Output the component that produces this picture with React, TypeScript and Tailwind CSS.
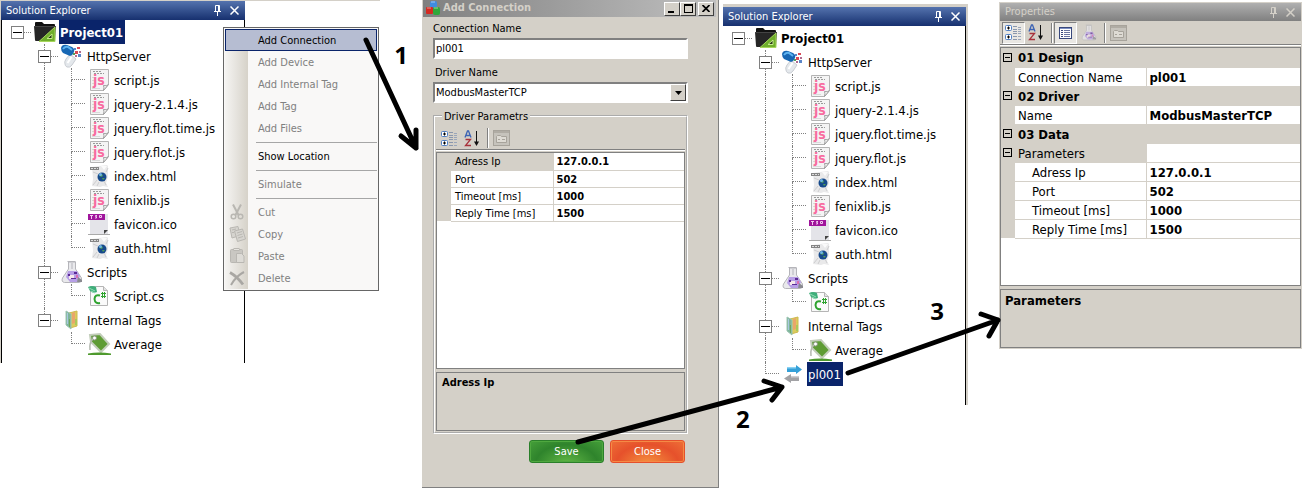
import React from "react";

const UI = "font-['DejaVu_Sans_Condensed','Noto_Sans',sans-serif]";
const COLUMNS =
  "grid grid-cols-[minmax(0,245fr)_minmax(0,177fr)_minmax(0,297fr)_minmax(0,4fr)_minmax(0,245fr)_minmax(0,31fr)_minmax(0,303fr)_minmax(0,7fr)]";

/* ---------- icons ---------- */

function ProjectIcon() {
  return (
    <svg width="23" height="22" viewBox="0 0 23 22" aria-hidden="true">
      <path d="M1 2q0-1 1-1h6l2 2h10q1 0 1 1v3H1z" fill="#111" />
      <path d="M0 5h22l-1 14q0 1-1 1H2q-1 0-1-1z" fill="#262626" />
      <path d="M0 5h22v1H0z" fill="#444" />
      <path d="M5 20.500 21 6v14.500z" fill="#6fae2c" stroke="#a6d65c" />
      <path d="M13 17.500l5-4.500v4.500z" fill="#2b3a1c" stroke="#c6ec8a" />
    </svg>
  );
}

function ServerIcon() {
  return (
    <svg width="22" height="24" viewBox="0 0 22 24" aria-hidden="true">
      <path d="M4 20q-1-2 1-5l4-5 6 5-4 6q-2 3-5 2-2-1-2-3z" fill="#e4e8ec" stroke="#c9cdd3" />
      <path d="M6.500 19l4-6" stroke="#fff" strokeWidth="2" />
      <path d="M0 4q1-4 6-3l5 2q3 2 2 5-1 3-4 4L2 9Q0 7 0 4z" fill="#1767b4" />
      <path d="M2 5q2-3 5-2l4 3" stroke="#5fb4f0" strokeWidth="2" fill="none" />
      <path d="M14 7h3v3h-3zM16 3h3v2h-3z" fill="#d94a55" />
      <path d="M17 10h3v3h-3zM13 4h2v2h-2z" fill="#5a86c8" />
      <path d="M14 11h2v2h-2zM18 7h2v2h-2z" fill="#b06a90" />
      <path d="M12 9h2v2h-2z" fill="#55a058" />
    </svg>
  );
}

function JsIcon() {
  return (
    <svg width="21" height="24" viewBox="0 0 21 24" aria-hidden="true">
      <path d="M1.500 1.500h18v15l-5 6h-13z" fill="#f4f4f4" stroke="#b4b4b4" />
      <path d="M14.500 22.500q1-3 0-5 3 1 5-1z" fill="#fff" stroke="#9c9c9c" />
      <path d="M4 3.500h9M5 5.500h10" stroke="#999" strokeDasharray="2 1" />
      <path d="M3 9.500h2M3 12.500h2M3 15.500h2M3 20.500h8" stroke="#dadada" />
      <text x="4" y="17" fontSize="14" fontWeight="bold" fill="#f86ca0" fontFamily="DejaVu Sans Condensed, sans-serif">
        js
      </text>
    </svg>
  );
}

function HtmlIcon() {
  return (
    <svg width="21" height="24" viewBox="0 0 21 24" aria-hidden="true">
      <path d="M3 3l7-1 8-1 1 1v11l-2 6 2 4-5-1-3 1-8-1 1-7z" fill="#e9e9ea" />
      <path d="M4 8l5 2M4 21l4-5M17 8l2-4M15 17l2 4M8 22l2-4" stroke="#cdcdcf" />
      <path d="M12 2l6 0-3 4z" fill="#fafafa" />
      <path d="M1 3h9v3H1z" fill="#858585" />
      <path d="M2 4.500h2m1 0h2m1 0h1" stroke="#ddd" />
      <circle cx="13" cy="13" r="4.500" fill="#174a8c" />
      <path d="M10 12q2-3 4-1l-1 2zM13 14l3 0-2 2z" fill="#4f9b58" />
      <circle cx="11.500" cy="10.500" r="1.500" fill="#6fb4e4" />
    </svg>
  );
}

function IcoIcon() {
  return (
    <svg width="22" height="24" viewBox="0 0 22 24" aria-hidden="true">
      <path d="M2 2h18v20H2z" fill="#e4e4e9" />
      <path d="M0 22.500h22" stroke="#aaa" />
      <path d="M0 2h17v6H0z" fill="#a0149c" />
      <path d="M2 3.500h3M3.500 4v3M9 3.500H7.500v1h1v1.500H7M11.500 3.500h2v2h-2z" stroke="#f3c9f0" fill="none" />
      <path d="M16 22v-4h4z" fill="#444" />
    </svg>
  );
}

function FlaskIcon({ faded = false }: { faded?: boolean }) {
  return (
    <svg
      width={faded ? 16 : 22}
      height={faded ? 17 : 24}
      viewBox="0 0 22 24"
      className={faded ? "opacity-70" : ""}
      aria-hidden="true"
    >
      <path d="M6.500 1.500h8M7.500 2v7L1.500 18q-1.500 4 2 4.500h15q3-.5 2-4.500l-6-9V2z" fill="#e9e9ec" stroke="#b5b5ba" />
      <path d="M11 3v6" stroke="#cfcfd4" strokeWidth="2" />
      <path d="M7 11h9l3 5-3 6H9l-4-5z" fill="#b79fe6" />
      <path d="M8 15h5v4H8z" fill="#f6eaea" />
      <path d="M13 12h3v2h-3zM7 14h2v2H7zM10 18h5v1h-5z" fill="#5c2b95" />
      <path d="M15 15h2v3h-2z" fill="#d96db0" />
      <path d="M17 17l4 3v2h-5z" fill="#8a8a90" />
    </svg>
  );
}

function CsIcon() {
  return (
    <svg width="22" height="24" viewBox="0 0 22 24" aria-hidden="true">
      <path d="M2.500 2.500h13l4 4v15h-17z" fill="#fafafa" stroke="#b5b5b5" />
      <path d="M15.500 2.500v4h4" fill="#e3e3e3" stroke="#b5b5b5" />
      <path d="M0 3q4-2 8 0l1 5q-4 2-7-1z" fill="#3fae7a" />
      <path d="M1 4l6 3M3 7l4 2" stroke="#93dcb5" />
      <path d="M12 11.500q-5-1.500-5.500 3.500.5 5 5.500 4" fill="none" stroke="#2fa32f" strokeWidth="2" />
      <path d="M13 9.500h5M13 12.500h5M14.500 8v6M16.500 8v6" stroke="#2fa32f" />
    </svg>
  );
}

function TagsFolderIcon() {
  return (
    <svg width="15" height="20" viewBox="0 0 15 20" aria-hidden="true">
      <path d="M4 3l8-2v15l-7 2z" fill="#dccb5c" stroke="#cdb94e" />
      <path d="M7 3l3-1v11l-3 1z" fill="#e9a66a" />
      <path d="M10 9h2v6h-2z" fill="#a9c95a" />
      <path d="M1 1l5 3v15l-5-4z" fill="#7fb59b" stroke="#9cc4b2" />
      <path d="M2.500 3v11" stroke="#a9c8e0" />
      <path d="M4.500 9v8" stroke="#6ea65a" />
    </svg>
  );
}

function TagIcon() {
  return (
    <svg width="23" height="24" viewBox="0 0 23 24" aria-hidden="true">
      <path d="M2 3l10-1 9 10-8 8L3 10z" fill="#5e9c34" stroke="#c3cebb" strokeWidth="2" />
      <circle cx="6.500" cy="6" r="2" fill="#fff" stroke="#8d9b84" />
      <path d="M5 7Q1 10 2 18" fill="none" stroke="#b4b9b0" strokeWidth="1.500" />
      <path d="M0 21.500q11-2 23 0V23H0z" fill="#4f9a2e" />
    </svg>
  );
}

function LinkIcon() {
  return (
    <svg width="18" height="18" viewBox="0 0 18 18" aria-hidden="true">
      <path d="M3 2h9V0l6 4.500L12 9V7H3z" fill="#35a0d8" />
      <path d="M3 2h9v1.500H3z" fill="#8bd2f3" />
      <path d="M15 11H7V9l-7 4.500L7 18v-2h8z" fill="#a2a2a5" />
      <path d="M7 11h8v1.500H7z" fill="#cfcfd2" />
    </svg>
  );
}

function PinIcon() {
  return (
    <svg width="9" height="11" viewBox="0 0 9 11" aria-hidden="true" fill="none" stroke="currentColor">
      <path d="M2.500 6V.5h4V6M5.500 1v5M1 6.500h7M4.500 7v4" />
    </svg>
  );
}

function CrossIcon() {
  return (
    <svg width="9" height="9" viewBox="0 0 9 9" aria-hidden="true" stroke="currentColor" strokeWidth="1.500">
      <path d="M0.500 0.500l8 8M8.500 0.500l-8 8" />
    </svg>
  );
}

function CategoryIcon() {
  return (
    <svg width="17" height="17" viewBox="0 0 17 17" aria-hidden="true" fill="none">
      <rect x="0.500" y="1.500" width="6" height="5" rx="1" fill="#fff" stroke="#4f7fc4" />
      <rect x="0.500" y="10.500" width="6" height="5" rx="1" fill="#fff" stroke="#4f7fc4" />
      <path d="M2 4h3M3.500 2.500v3M2 13h3M3.500 11.500v3" stroke="#000" />
      <path d="M8 2.500h4M8 5.500h4M8 7.500h4M8 9.500h4M8 12.500h4M8 15.500h4" stroke="#8a97ad" />
      <path d="M13 3.500h3M13 5.500h3M13 7.500h3M13 9.500h3M13 12.500h3M13 15.500h3" stroke="#9aa6ba" />
    </svg>
  );
}

function SortIcon() {
  return (
    <svg width="16" height="17" viewBox="0 0 16 17" aria-hidden="true" fill="none">
      <path d="M1 7.500 3.500 1h1L7 7.500M2 5.500h4" stroke="#3c63b4" strokeWidth="1.300" />
      <path d="M1.500 9.500h5l-5 6h5.500" stroke="#a8323c" strokeWidth="1.300" />
      <path d="M12.500 1v14" stroke="#111" />
      <path d="M10 11.500h5l-2.500 4.500z" fill="#111" />
    </svg>
  );
}

function PagesIcon() {
  return (
    <svg width="17" height="16" viewBox="0 0 17 16" aria-hidden="true" fill="none">
      <rect x="0.500" y="0.500" width="16" height="15" fill="#c6c3bc" stroke="#a7a39b" />
      <path d="M1 2h15" stroke="#b0aca4" strokeWidth="2" />
      <path d="M3.500 12.500v-6l1-1h3l1 1h5v6z" stroke="#a7a39b" fill="#dedbd4" />
      <path d="M5 9.500h2M9 9.500h3" stroke="#a7a39b" />
    </svg>
  );
}

function ListIcon() {
  return (
    <svg width="13" height="12" viewBox="0 0 13 12" aria-hidden="true">
      <rect x="0.500" y="0.500" width="12" height="11" fill="#fff" stroke="#39487c" />
      <path d="M1 1.500h11" stroke="#7d8fc4" />
      <path d="M2 3.500h2M2 5.500h2M2 7.500h2M2 9.500h2" stroke="#39487c" />
      <path d="M5 3.500h6M5 5.500h6M5 7.500h6M5 9.500h6" stroke="#6a76a0" />
    </svg>
  );
}

function AppIcon() {
  return (
    <svg width="15" height="15" viewBox="0 0 15 15" aria-hidden="true">
      <rect x="4" y="0" width="7" height="7" rx="2" fill="#3f8be0" />
      <rect x="0" y="6" width="7" height="7" rx="1" fill="#d52a22" />
      <rect x="7" y="6" width="7" height="8" rx="2" fill="#2fa83a" />
      <path d="M1 7h4M8 7h4M5 1h4" stroke="#fff" strokeOpacity="0.500" />
    </svg>
  );
}

function CutIcon() {
  return (
    <svg width="14" height="16" viewBox="0 0 14 16" aria-hidden="true" fill="none" stroke="#b9b7b2">
      <path d="M3 0.500 8.500 11M11 0.500 5.500 11" strokeWidth="2" />
      <circle cx="3.500" cy="12.500" r="2.300" strokeWidth="1.500" />
      <circle cx="10.500" cy="12.500" r="2.300" strokeWidth="1.500" />
    </svg>
  );
}

function CopyIcon() {
  return (
    <svg width="17" height="16" viewBox="0 0 17 16" aria-hidden="true" fill="#d6d4cf" stroke="#b9b7b2">
      <path d="M1 2l8-1.500 2 9L3 12z" />
      <path d="M5.500 5l8-2 3 10-8 2.500z" />
      <path d="M8 7l5-1.500M8.500 9.500l5-1.500M9 12l5-1.500M3 4l4-1M3 6.500h2" fill="none" />
    </svg>
  );
}

function PasteIcon() {
  return (
    <svg width="15" height="16" viewBox="0 0 15 16" aria-hidden="true" fill="#c9c7c2" stroke="#b9b7b2">
      <rect x="0.500" y="1.500" width="12" height="13" rx="1" />
      <rect x="4" y="0.500" width="5" height="2" fill="#e6e4df" />
      <path d="M6.500 5.500h5l2.500 2.500v6.500H6.500z" fill="#dddbd6" />
    </svg>
  );
}

function DeleteIcon() {
  return (
    <svg width="16" height="15" viewBox="0 0 16 15" aria-hidden="true" fill="none" stroke="#a9a7a3">
      <path d="M1 1.500q7 4 13 12" strokeWidth="2.800" />
      <path d="M15 1Q7 5 2 14" strokeWidth="2" />
    </svg>
  );
}

/* ---------- solution tree ---------- */

type Node = { label: string; level: number; icon: React.ReactNode; last?: boolean; bold?: boolean };

const js = <JsIcon />;
const html = <HtmlIcon />;

const NODES: Node[] = [
  { label: "Project01", level: 0, icon: <ProjectIcon />, bold: true },
  { label: "HttpServer", level: 1, icon: <ServerIcon /> },
  { label: "script.js", level: 2, icon: js },
  { label: "jquery-2.1.4.js", level: 2, icon: js },
  { label: "jquery.flot.time.js", level: 2, icon: js },
  { label: "jquery.flot.js", level: 2, icon: js },
  { label: "index.html", level: 2, icon: html },
  { label: "fenixlib.js", level: 2, icon: js },
  { label: "favicon.ico", level: 2, icon: <IcoIcon /> },
  { label: "auth.html", level: 2, icon: html, last: true },
  { label: "Scripts", level: 1, icon: <FlaskIcon /> },
  { label: "Script.cs", level: 2, icon: <CsIcon />, last: true },
  { label: "Internal Tags", level: 1, icon: <TagsFolderIcon /> },
  { label: "Average", level: 2, icon: <TagIcon />, last: true },
];

function Blank() {
  return <span className="h-6 w-[27px] shrink-0" />;
}

function Guide({ branch, through }: { branch: boolean; through: boolean }) {
  return (
    <span className="flex h-6 w-[27px] shrink-0 flex-col pl-[13px]">
      <span className={`h-3 border-l border-dotted border-[#808080] ${branch ? "border-b" : ""}`} />
      <span className={`h-3 ${through ? "border-l border-dotted border-[#808080]" : ""}`} />
    </span>
  );
}

function Expander({ above, below, label }: { above: boolean; below: boolean; label: string }) {
  return (
    <span className="grid h-6 w-[27px] shrink-0 grid-cols-[7px_13px_7px] grid-rows-[6px_13px_5px]">
      <span className={`col-start-2 ml-[6px] ${above ? "border-l border-dotted border-[#808080]" : ""}`} />
      <button
        type="button"
        aria-label={`Collapse ${label}`}
        className="col-start-2 row-start-2 flex items-center justify-center border border-[#808080] bg-white"
      >
        <span className="h-px w-[9px] bg-black" />
      </button>
      <span className="col-start-3 row-start-2 self-center border-t border-dotted border-[#808080]" />
      <span className={`col-start-2 row-start-3 ml-[6px] ${below ? "border-l border-dotted border-[#808080]" : ""}`} />
    </span>
  );
}

function Tree({ selected, withConnection }: { selected: string; withConnection: boolean }) {
  const nodes = withConnection
    ? [...NODES, { label: "pl001", level: 1, icon: <LinkIcon />, last: true } as Node]
    : NODES;
  return (
    <ul className="text-[13px] leading-[22px]">
      {nodes.map((n) => {
        const isTags = n.label === "Internal Tags" || n.label === "Average";
        const rootLine = !isTags || withConnection;
        return (
          <li key={n.label} className="flex h-6 items-center whitespace-nowrap">
            {n.level > 0 && <Blank />}
            {n.level === 0 && <Expander above={false} below={false} label={n.label} />}
            {n.level === 1 && n.label !== "pl001" && <Expander above below={rootLine} label={n.label} />}
            {n.label === "pl001" && <Guide branch through={false} />}
            {n.level === 2 && (rootLine ? <Guide branch={false} through /> : <Blank />)}
            {n.level === 2 && <Guide branch through={!n.last} />}
            <span className="flex w-7 shrink-0 items-center justify-center">{n.icon}</span>
            <span
              className={`pt-[2px] pr-[2px] pl-px ${n.bold ? "font-bold" : ""} ${
                n.label === selected ? "bg-[#0a246a] text-white" : "text-black"
              }`}
            >
              {n.label}
            </span>
          </li>
        );
      })}
    </ul>
  );
}

function PanelTitle({ title, active }: { title: string; active: boolean }) {
  return (
    <header
      className={`flex items-center gap-2 pr-[6px] pl-[5px] text-[11px] ${
        active
          ? "h-[19px] bg-linear-to-b from-[#5573ae] to-[#17306f] text-white"
          : "h-[18px] bg-linear-to-b from-[#b0b0b0] to-[#808080] text-[#d4d0c8]"
      }`}
    >
      <h2 className="flex-1 pt-px whitespace-nowrap">{title}</h2>
      <button type="button" aria-label="Pin panel">
        <PinIcon />
      </button>
      <button type="button" aria-label="Close panel">
        <CrossIcon />
      </button>
    </header>
  );
}

/* ---------- context menu ---------- */

type Item = { label: string; enabled?: boolean; active?: boolean; icon?: React.ReactNode };

const MENU: Item[][] = [
  [
    { label: "Add Connection", enabled: true, active: true },
    { label: "Add Device" },
    { label: "Add Internal Tag" },
    { label: "Add Tag" },
    { label: "Add Files" },
  ],
  [{ label: "Show Location", enabled: true }],
  [{ label: "Simulate" }],
  [
    { label: "Cut", icon: <CutIcon /> },
    { label: "Copy", icon: <CopyIcon /> },
    { label: "Paste", icon: <PasteIcon /> },
    { label: "Delete", icon: <DeleteIcon /> },
  ],
];

function ContextMenu() {
  return (
    <div
      role="menu"
      className="z-10 mt-[27px] -ml-[22px] w-[156px] border border-[#666] bg-[#f9f8f7] p-px text-[11px] text-[#808080]"
    >
      <div className="bg-[linear-gradient(to_right,#f5f4f2,#d6d2c9_23px,transparent_23px)]">
        {MENU.map((group, g) => (
          <div key={g} role="group">
            {g > 0 && <div role="separator" className="my-[2px] ml-[31px] h-[2px] border-b border-[#a6a6a6]" />}
            {group.map((item) => (
              <button
                key={item.label}
                type="button"
                role="menuitem"
                disabled={!item.enabled}
                className={`flex h-[22px] w-full items-center border text-left ${
                  item.active ? "border-[#0a246a] bg-[#b6bdd2]" : "border-transparent"
                } ${item.enabled ? "text-black" : ""}`}
              >
                <span className="flex w-[22px] justify-center">{item.icon}</span>
                <span className="pt-[2px] pl-[10px]">{item.label}</span>
              </button>
            ))}
          </div>
        ))}
      </div>
    </div>
  );
}

/* ---------- add connection dialog ---------- */

const SUNKEN = "border-2 border-t-[#808080] border-l-[#808080] border-r-white border-b-white bg-white";
const RAISED = "border border-t-white border-l-white border-r-[#404040] border-b-[#404040] bg-[#d4d0c8]";

const PARAMETERS = [
  ["Adress Ip", "127.0.0.1"],
  ["Port", "502"],
  ["Timeout [ms]", "1000"],
  ["Reply Time [ms]", "1500"],
];

function DialogGrid() {
  return (
    <div className="h-[217px] border border-[#808080] bg-white">
      <table className="w-full table-fixed border-collapse">
        <colgroup>
          <col className="w-[14px]" />
          <col className="w-[102px]" />
          <col />
        </colgroup>
        <tbody>
          {PARAMETERS.map(([name, value], i) => (
            <tr key={name} className="h-[17px]">
              <td className="bg-[#d4d0c8] p-0" />
              <th
                scope="row"
                className={`border-r border-b border-[#d4d0c8] p-0 pt-px pl-1 text-left leading-[15px] font-normal ${
                  i === 0 ? "bg-[#d4d0c8]" : ""
                }`}
              >
                {name}
              </th>
              <td className="border-b border-[#d4d0c8] p-0 pt-px pl-[3px] leading-[15px] font-bold">{value}</td>
            </tr>
          ))}
        </tbody>
      </table>
    </div>
  );
}

function AddConnectionDialog() {
  return (
    <section
      aria-label="Add Connection"
      className="flex h-[488px] flex-col border-r border-b border-[#808080] bg-[#d4d0c8] pl-px text-[11px] text-black"
    >
      <header className="mr-[2px] flex h-[17px] items-center gap-[2px] bg-linear-to-r from-[#808080] to-[#c0c0c0] pr-[2px] pl-[3px]">
        <AppIcon />
        <h2 className="flex-1 font-bold whitespace-nowrap text-[#d4d0c8]">Add Connection</h2>
        <div className="flex h-[14px]">
          <button type="button" aria-label="Minimize" className={`flex w-4 items-end pb-[2px] pl-[3px] ${RAISED}`}>
            <span className="h-[2px] w-[6px] bg-black" />
          </button>
          <button type="button" aria-label="Maximize" className={`flex w-4 items-center justify-center ${RAISED}`}>
            <span className="h-[9px] w-[9px] border border-t-2 border-black" />
          </button>
          <button type="button" aria-label="Close" className={`ml-[2px] flex w-4 items-center justify-center ${RAISED}`}>
            <svg width="8" height="7" viewBox="0 0 8 7" aria-hidden="true" stroke="#000" strokeWidth="1.700">
              <path d="M.5 0l7 7M7.500 0l-7 7" />
            </svg>
          </button>
        </div>
      </header>

      <form className="flex flex-col pr-[30px] pl-[10px]" onSubmit={(e) => e.preventDefault()}>
        <label htmlFor="connection-name" className="mt-1 pt-px leading-[13px]">
          Connection Name
        </label>
        <input
          id="connection-name"
          defaultValue="pl001"
          className={`mt-[3px] h-[21px] w-full pl-px outline-none ${SUNKEN}`}
        />
        <label htmlFor="driver-name" className="mt-[6px] pt-px pl-[2px] leading-[13px]">
          Driver Name
        </label>
        <div className={`mt-[3px] flex h-[21px] items-stretch ${SUNKEN}`}>
          <select id="driver-name" className="flex-1 appearance-none bg-white pt-px pl-px outline-none">
            <option>ModbusMasterTCP</option>
          </select>
          <span className={`flex w-4 items-center justify-center ${RAISED}`}>
            <svg width="7" height="4" viewBox="0 0 7 4" aria-hidden="true">
              <path d="M0 0h7L3.500 4z" fill="#000" />
            </svg>
          </span>
        </div>

        <fieldset className="mt-[6px] min-w-0 border-2 border-white px-px pb-px [border-style:groove]">
          <legend className="ml-[6px] px-[2px] pt-px leading-[13px]">Driver Parametrs</legend>
          <div className="flex h-[27px] items-center border-b border-[#808080] pt-1 pl-[5px]">
            <button type="button" aria-label="Categorized">
              <CategoryIcon />
            </button>
            <button type="button" aria-label="Alphabetical" className="ml-[6px]">
              <SortIcon />
            </button>
            <span className="mx-1 ml-[7px] h-5 w-[2px] border-r border-l border-r-white border-l-[#808080]" />
            <button type="button" aria-label="Property pages" disabled>
              <PagesIcon />
            </button>
          </div>
          <div className="mb-px h-px bg-white" />
          <DialogGrid />
          <div className="mt-[3px] h-[59px] border border-[#808080] px-[5px] pt-[2px] leading-[16px] font-bold">Adress Ip</div>
        </fieldset>

        <div className="mt-[6px] mr-[3px] flex justify-end gap-[6px] text-white">
          <button
            type="submit"
            className="h-[23px] w-[75px] rounded-[3px] border border-[#2a7f2a] bg-[radial-gradient(ellipse_at_50%_110%,#62b846_0%,#2f842c_60%,#46a03a_100%)] pt-px shadow-[inset_0_0_0_1px_#4fa83f]"
          >
            Save
          </button>
          <button
            type="button"
            className="h-[23px] w-[75px] rounded-[3px] border border-[#e5502c] bg-[radial-gradient(ellipse_at_50%_110%,#f5923f_0%,#e6512b_60%,#ee7038_100%)] pt-px shadow-[inset_0_0_0_1px_#f58a45]"
          >
            Close
          </button>
        </div>
      </form>
    </section>
  );
}

/* ---------- properties ---------- */

type Row = { kind: "group" | "item" | "parent" | "child"; name: string; value?: string };

const ROWS: Row[] = [
  { kind: "group", name: "01 Design" },
  { kind: "item", name: "Connection Name", value: "pl001" },
  { kind: "group", name: "02 Driver" },
  { kind: "item", name: "Name", value: "ModbusMasterTCP" },
  { kind: "group", name: "03 Data" },
  { kind: "parent", name: "Parameters", value: "" },
  ...PARAMETERS.map(([name, value]) => ({ kind: "child" as const, name, value })),
];

function Properties() {
  return (
    <section aria-label="Properties" className="mt-[2px] bg-[#d4d0c8] p-px text-[13px] text-black">
      <PanelTitle title="Properties" active={false} />
      <div className="flex h-[24px] items-center border-b border-[#808080] pl-[2px]">
        <button
          type="button"
          aria-label="Categorized"
          className="flex h-[22px] w-[23px] items-center justify-center border border-t-[#808080] border-r-white border-b-white border-l-[#808080] bg-[#e9e7e3]"
        >
          <CategoryIcon />
        </button>
        <button type="button" aria-label="Alphabetical" className="ml-[3px]">
          <SortIcon />
        </button>
        <span className="mr-[1px] ml-[7px] h-5 w-[2px] border-r border-l border-r-white border-l-[#808080]" />
        <button
          type="button"
          aria-label="Properties"
          className="flex h-[22px] w-[23px] items-center justify-center border border-t-[#808080] border-r-white border-b-white border-l-[#808080] bg-[#e9e7e3]"
        >
          <ListIcon />
        </button>
        <button type="button" aria-label="Scripts" className="ml-1">
          <FlaskIcon faded />
        </button>
        <span className="mr-1 ml-[7px] h-5 w-[2px] border-r border-l border-r-white border-l-[#808080]" />
        <button type="button" aria-label="Property pages" disabled>
          <PagesIcon />
        </button>
      </div>
      <div className="mb-px h-px bg-white" />
      <div className="h-[239px] border border-[#808080] bg-white">
        <table className="w-full table-fixed border-collapse">
          <colgroup>
            <col className="w-[14px]" />
            <col className="w-[131px]" />
            <col />
          </colgroup>
          <tbody>
            {ROWS.map((r) => {
              const shaded = r.kind === "group" || r.kind === "parent";
              return (
                <tr key={r.name} className="h-[19px]">
                  <td className="bg-[#d4d0c8] p-0 align-middle">
                    {shaded && (
                      <button
                        type="button"
                        aria-label={`Collapse ${r.name}`}
                        className="ml-[2px] flex h-[9px] w-[9px] items-center justify-center border border-black"
                      >
                        <span className="h-px w-[5px] bg-black" />
                      </button>
                    )}
                  </td>
                  <th
                    scope="row"
                    colSpan={r.kind === "group" ? 2 : 1}
                    className={`border-r border-b border-[#d4d0c8] p-0 pt-[2px] text-left leading-4 whitespace-nowrap ${
                      shaded ? "bg-[#d4d0c8]" : ""
                    } ${r.kind === "group" ? "font-bold" : "font-normal"} ${r.kind === "child" ? "pl-[17px]" : "pl-[3px]"}`}
                  >
                    {r.name}
                  </th>
                  {r.kind !== "group" && (
                    <td className="border-b border-[#d4d0c8] p-0 pt-[2px] pl-[3px] leading-4 font-bold">{r.value}</td>
                  )}
                </tr>
              );
            })}
          </tbody>
        </table>
      </div>
      <div className="mt-[3px] h-[59px] border border-[#808080] px-1 pt-[2px] leading-[18px] font-bold">Parameters</div>
    </section>
  );
}

/* ---------- step arrows ---------- */

function Steps() {
  const digit = "text-[24px] leading-6 font-bold text-black font-['Open_Sans','Noto_Sans',sans-serif]";
  return (
    <div className={`pointer-events-none absolute inset-0 z-20 ${COLUMNS}`}>
      <svg
        className="absolute inset-0 h-full w-full"
        viewBox="0 0 1309 493"
        preserveAspectRatio="none"
        aria-hidden="true"
        fill="none"
        stroke="#000"
        strokeWidth="5"
        strokeLinecap="round"
        strokeLinejoin="round"
      >
        <path d="M366 40 416 148M401 136 416 148 416 130" />
        <path d="M578 442 782 387M764 381 782 387 772 400" />
        <path d="M848 373 998 320M981 314 998 320 989 336" />
      </svg>
      <span className={`col-start-2 mt-[43px] mr-[14px] justify-self-end ${digit}`}>1</span>
      <span className="relative col-start-5 flex justify-between pr-6 pl-[13px]">
        <span className={`mt-[407px] ${digit}`}>2</span>
        <span className={`mt-[299px] ${digit}`}>3</span>
      </span>
    </div>
  );
}

export default function App() {
  return (
    <main className={`relative min-h-[493px] items-start bg-white ${COLUMNS} ${UI}`}>
      <section aria-label="Solution Explorer" className="border-t border-l border-[#d4d0c8]">
        <PanelTitle title="Solution Explorer" active />
        <div className="h-[343px] border-r border-l border-black pl-[2px]">
          <Tree selected="Project01" withConnection={false} />
        </div>
      </section>

      <div>
        <div className="-mb-px h-px w-[135px] bg-[#d4d0c8]" />
        <ContextMenu />
      </div>

      <div>
        <AddConnectionDialog />
      </div>

      <section
        aria-label="Solution Explorer with connection"
        className="col-start-5 mt-1 border-t-[3px] border-r-2 border-[#d4d0c8]"
      >
        <PanelTitle title="Solution Explorer" active />
        <div className="h-[379px] border-r border-black pl-[2px]">
          <Tree selected="pl001" withConnection />
        </div>
      </section>

      <div className="col-start-7">
        <Properties />
      </div>
      <Steps />
    </main>
  );
}
